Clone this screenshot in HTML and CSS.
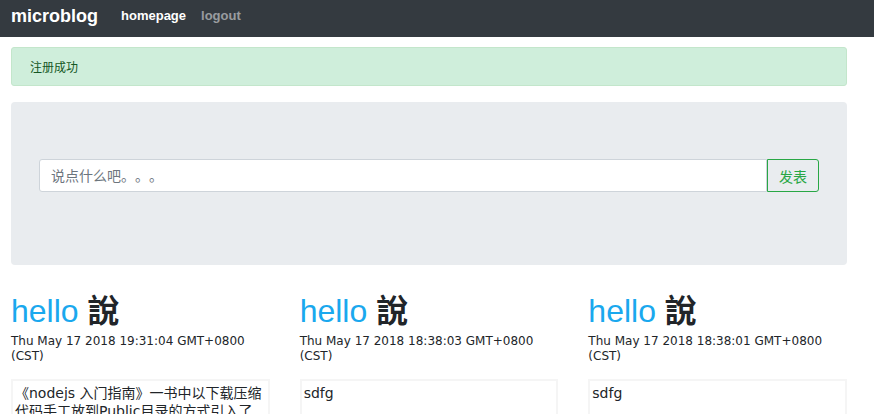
FILE: index.html
```html
<!DOCTYPE html>
<html>
<head>
<meta charset="utf-8">
<link rel="stylesheet" href="styles.css">
</head>
<body>
<nav class="navbar">
  <a class="brand">microblog</a>
  <a class="nav-link active">homepage</a>
  <a class="nav-link">logout</a>
</nav>
<main class="container">
  <div class="alert">注册成功</div>
  <div class="jumbotron">
    <form class="post-form">
      <input class="post-input" type="text" placeholder="说点什么吧。。。">
      <button class="post-btn" type="button">发表</button>
    </form>
  </div>
  <div class="posts">
    <div class="post">
      <h2 class="post-title"><span class="user">hello</span> 說</h2>
      <p class="post-time">Thu May 17 2018 19:31:04 GMT+0800 (CST)</p>
      <div class="post-body">《nodejs 入门指南》一书中以下载压缩代码手工放到Public目录的方式引入了bootstrap</div>
    </div>
    <div class="post">
      <h2 class="post-title"><span class="user">hello</span> 說</h2>
      <p class="post-time">Thu May 17 2018 18:38:03 GMT+0800 (CST)</p>
      <div class="post-body">sdfg</div>
    </div>
    <div class="post">
      <h2 class="post-title"><span class="user">hello</span> 說</h2>
      <p class="post-time">Thu May 17 2018 18:38:01 GMT+0800 (CST)</p>
      <div class="post-body">sdfg</div>
    </div>
  </div>
</main>
</body>
</html>
```
FILE: styles.css
```css
* { box-sizing: border-box; }
body {
  margin: 0;
  font-family: "DejaVu Sans", "Noto Sans CJK SC", sans-serif;
  color: #212529;
  background: #fff;
  text-spacing-trim: space-all;
}
.navbar {
  height: 37px;
  background: #343a40;
  display: flex;
  align-items: center;
  padding: 0 11px 4px 11px;
  font-family: "Liberation Sans", "Noto Sans CJK SC", sans-serif;
}
.brand {
  color: #fff;
  font-size: 18px;
  font-weight: 700;
  margin-right: 23px;
}
.nav-link {
  color: rgba(255,255,255,0.5);
  font-size: 13px;
  font-weight: 700;
  margin-right: 15px;
  margin-bottom: 2px;
}
.nav-link.active { color: #fff; }
.container {
  padding: 10px 27px 0 11px;
}
.alert {
  height: 39px;
  background: #cfeedb;
  border: 1px solid #c3e6cb;
  border-radius: 3px;
  color: #155724;
  font-size: 12px;
  display: flex;
  align-items: center;
  padding-left: 18px;
}
.jumbotron {
  margin-top: 16px;
  height: 163px;
  background: #e9ecef;
  border-radius: 4px;
  padding: 57px 28px 0 28px;
}
.post-form { display: flex; }
.post-input {
  flex: 1;
  height: 33px;
  border: 1px solid #ced4da;
  border-radius: 3px 0 0 3px;
  padding: 0 11px;
  font-family: "DejaVu Sans", "Noto Sans CJK SC", sans-serif;
  font-size: 14px;
  color: #495057;
  background: #fff;
  text-spacing-trim: space-all;
}
.post-input::placeholder { color: #6c757d; }
.post-btn {
  width: 52px;
  height: 33px;
  border: 1px solid #28a745;
  border-radius: 0 3px 3px 0;
  background: transparent;
  color: #28a745;
  font-family: "DejaVu Sans", "Noto Sans CJK SC", sans-serif;
  font-size: 14px;
}
.posts {
  display: grid;
  grid-template-columns: repeat(3, 1fr);
  column-gap: 30px;
  margin-top: 27px;
}
.post-title {
  margin: 0;
  font-family: "Liberation Sans", "Noto Sans CJK SC", sans-serif;
  font-size: 32px;
  line-height: 38px;
  font-weight: 700;
  color: #212529;
}
.user { color: #1aa8ee; font-weight: 400; }
.post-time {
  margin: 4px 0 0 0;
  font-size: 12px;
  line-height: 15px;
}
.post-body {
  margin-top: 15px;
  height: 60px;
  border: 2px solid #f5f5f5;
  padding: 3px 2px;
  font-size: 14px;
  line-height: 18px;
}
```
